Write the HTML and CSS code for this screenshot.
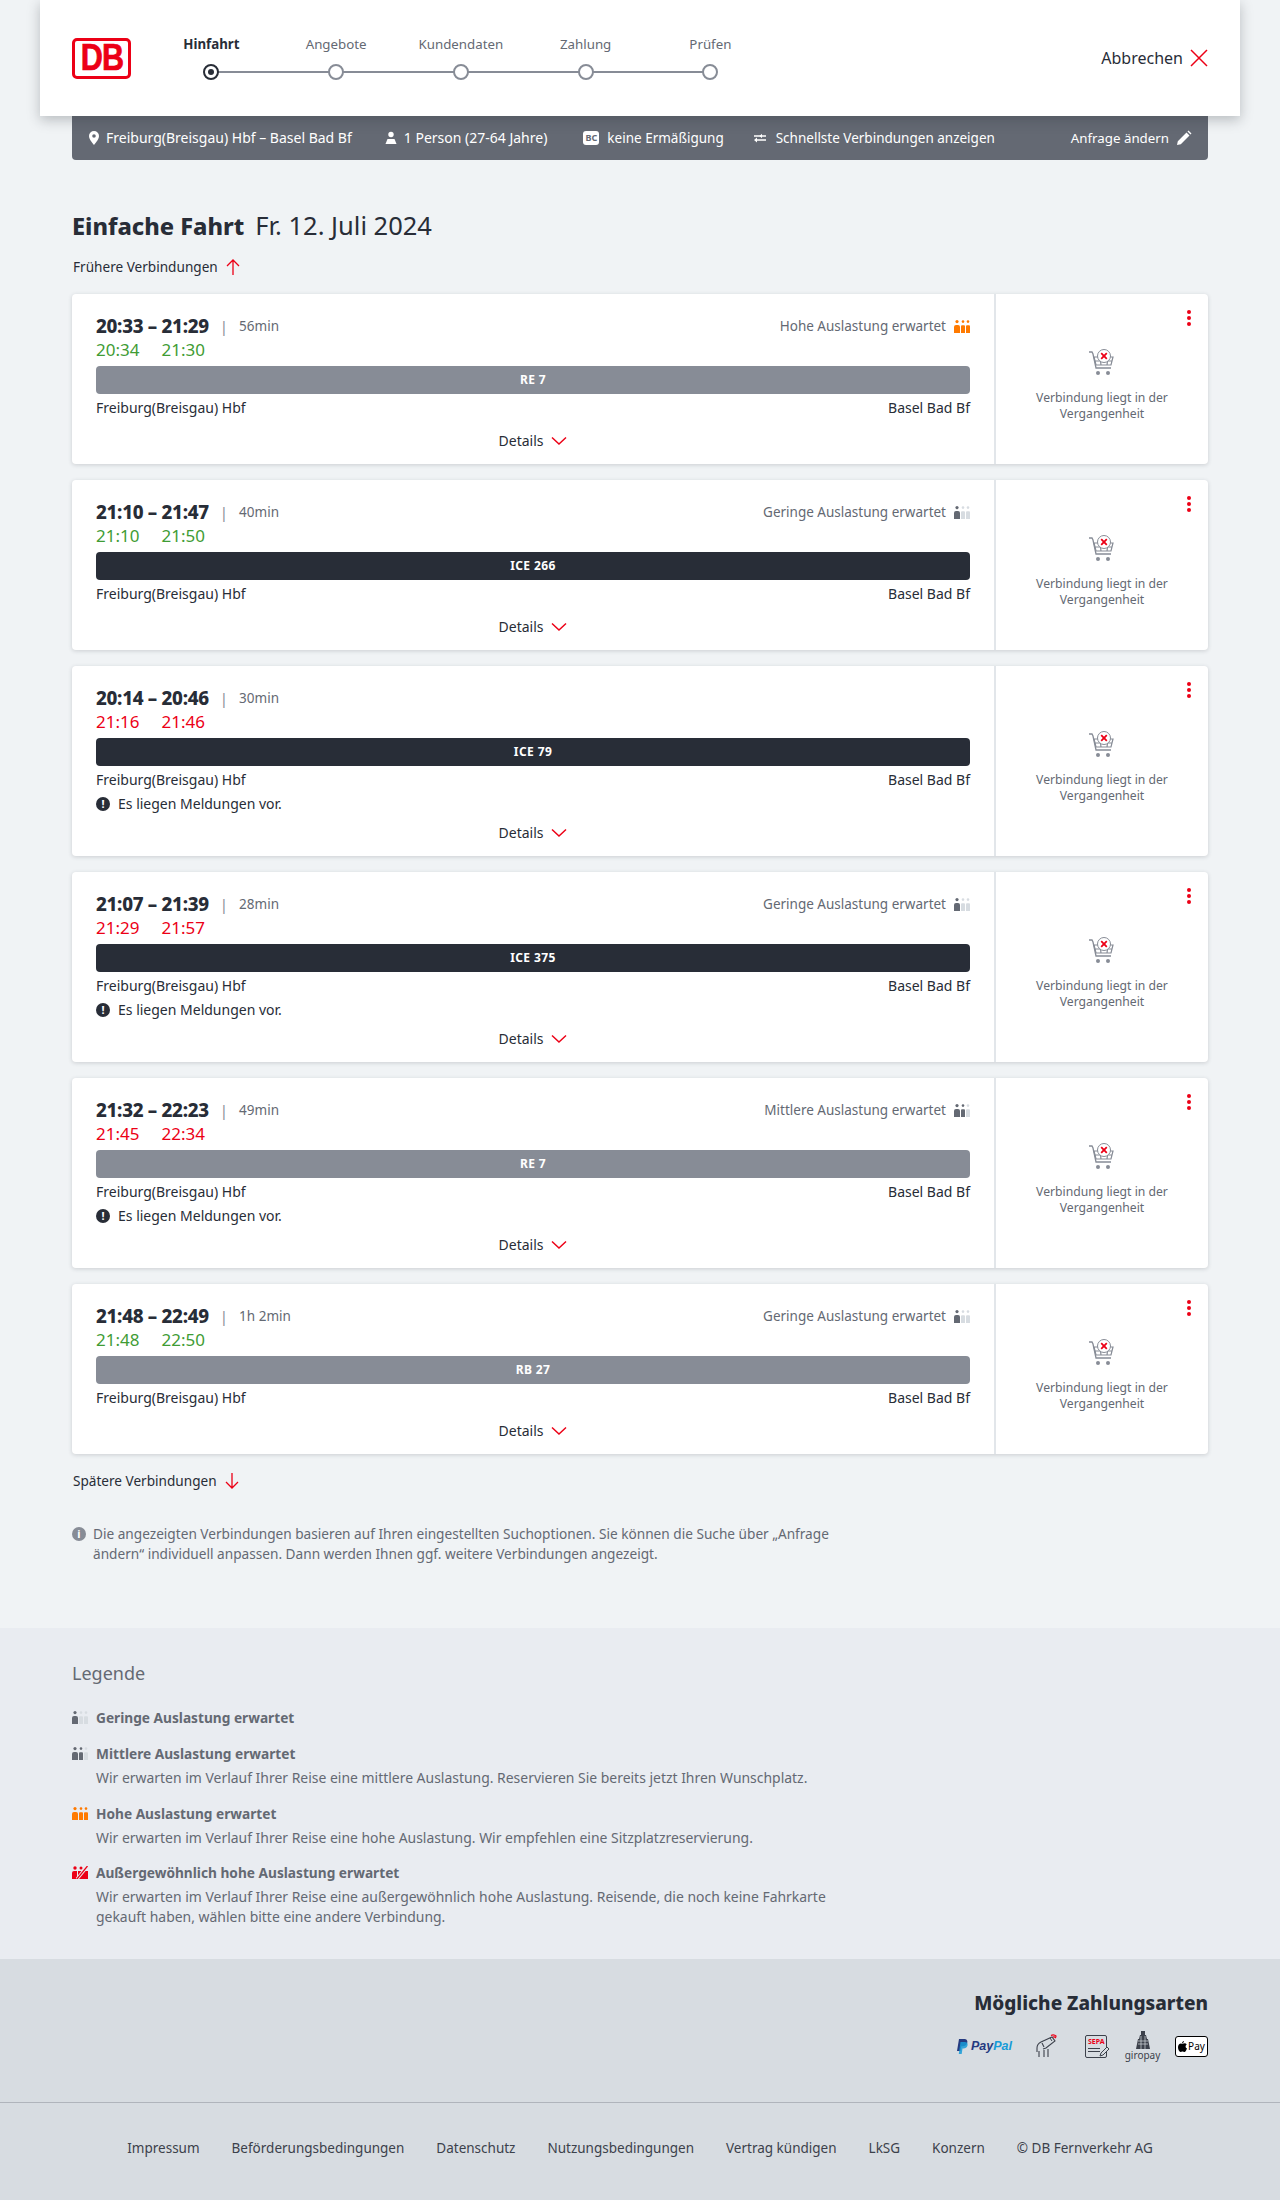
FILE: index.html
```html
<!DOCTYPE html>
<html lang="de">
<head>
<meta charset="utf-8">
<title>Einfache Fahrt</title>
<link rel="stylesheet" href="styles.css">
</head>
<body>
<svg class="defs" width="0" height="0" aria-hidden="true">
  <symbol id="cart" viewBox="0 0 28 28">
    <path d="M1 3h3l1 2 3 14h15" fill="none" stroke="currentColor" stroke-width="1.3"/>
    <path d="M6 8h19l-2 8H8zM7 12h17M12 8l1 8M20 8l-1 8" fill="none" stroke="currentColor" stroke-width="1.2"/>
    <circle cx="10" cy="24" r="2" fill="currentColor"/><circle cx="20" cy="24" r="2" fill="currentColor"/>
    <circle cx="16" cy="7" r="6.5" fill="#fff" stroke="currentColor" stroke-width="1"/>
    <path d="M13.2 4.2l5.6 5.6M18.8 4.2l-5.6 5.6" stroke="#ec0016" stroke-width="1.8"/>
  </symbol>
  <symbol id="fig" viewBox="0 0 16 13">
    <circle cx="3" cy="1.6" r="1.6"/><path d="M0 7a2 2 0 0 1 2-2h2a2 2 0 0 1 2 2v6H0z"/>
  </symbol>
  <symbol id="fig2" viewBox="0 0 16 13">
    <circle cx="9" cy="1.6" r="1.3"/><path d="M7 6.200a1 1 0 0 1 1-1h2a1 1 0 0 1 1 1V13H7z"/>
  </symbol>
  <symbol id="fig3" viewBox="0 0 16 13">
    <circle cx="14" cy="1.6" r="1.300"/><path d="M12 6.200a1 1 0 0 1 1-1h2a1 1 0 0 1 1 1V13h-4z"/>
  </symbol>
  <symbol id="chev" viewBox="0 0 16 10"><path d="M1 1.500l7 6.500 7-6.500" fill="none" stroke="#ec0016" stroke-width="1.500"/></symbol>
</svg>

<header class="topbar">
  <div class="logo"><span class="logo-text">DB</span></div>
  <ol class="stepper">
    <li class="step step-active"><span class="step-label">Hinfahrt</span><span class="step-dot"></span></li>
    <li class="step"><span class="step-label">Angebote</span><span class="step-dot"></span></li>
    <li class="step"><span class="step-label">Kundendaten</span><span class="step-dot"></span></li>
    <li class="step"><span class="step-label">Zahlung</span><span class="step-dot"></span></li>
    <li class="step"><span class="step-label">Prüfen</span><span class="step-dot"></span></li>
  </ol>
  <a class="cancel">Abbrechen
    <svg width="18" height="18" viewBox="0 0 18 18"><path d="M1 1l16 16M17 1L1 17" stroke="#ec0016" stroke-width="1.500"/></svg>
  </a>
</header>

<main class="main">
  <div class="infobar">
    <span class="info-item">
      <svg width="12" height="14" viewBox="0 0 12 14"><path fill-rule="evenodd" d="M6 0a5 5 0 0 1 5 5c0 3.500-5 9-5 9S1 8.500 1 5a5 5 0 0 1 5-5zm0 3.200a1.800 1.800 0 1 0 0 3.600 1.800 1.800 0 0 0 0-3.600z" fill="#fff"/></svg>
      Freiburg(Breisgau) Hbf – Basel Bad Bf</span>
    <span class="info-item">
      <svg width="14" height="14" viewBox="0 0 14 14"><circle cx="7" cy="3.500" r="2.700" fill="#fff"/><path d="M3.500 8h7l2 5H1.500z" fill="#fff"/></svg>
      1 Person (27-64 Jahre)</span>
    <span class="info-item info-small info-bc"><span class="bc">BC</span>keine Ermäßigung</span>
    <span class="info-item info-small info-swap">
      <svg width="12" height="10" viewBox="0 0 12 10"><path d="M0 3h12M3 7h9" stroke="#fff" stroke-width="1.300" fill="none"/><path d="M8 .8v4.400L5.500 3zM0 7l3-2.400v4.800z" fill="#fff"/></svg>
      Schnellste Verbindungen anzeigen</span>
    <span class="info-item info-small info-edit">Anfrage ändern
      <svg width="16" height="16" viewBox="0 0 16 16"><path d="M1 15l.8-3.800L10.500 2.500l3 3L4.800 14.200zM11.500 1.500l1-1 3 3-1 1z" fill="#fff"/></svg>
    </span>
  </div>

  <h1 class="title"><strong>Einfache Fahrt</strong><span class="title-date">Fr. 12. Juli 2024</span></h1>

  <a class="earlier">Frühere Verbindungen
    <svg width="16" height="16" viewBox="0 0 16 16"><path d="M8 16V1M2 7l6-6 6 6" fill="none" stroke="#ec0016" stroke-width="1.300"/></svg>
  </a>

  <section class="cards">
    <article class="card">
      <div class="card-main">
        <div class="row-top"><span class="times">20:33 – 21:29</span><span class="sep">|</span><span class="dur">56min</span>
          <span class="load">Hohe Auslastung erwartet<svg class="occ occ-high" width="16" height="13"><use href="#fig"/><use href="#fig2"/><use href="#fig3"/></svg></span></div>
        <div class="real real-ok"><span>20:34</span><span>21:30</span></div>
        <div class="bar bar-regio">RE 7</div>
        <div class="places"><span>Freiburg(Breisgau) Hbf</span><span>Basel Bad Bf</span></div>
        <a class="details">Details<svg width="16" height="10"><use href="#chev"/></svg></a>
      </div>
      <aside class="card-side"><span class="menu"><i></i><i></i><i></i></span><svg class="cart" width="28" height="28"><use href="#cart"/></svg><p class="side-text">Verbindung liegt in der Vergangenheit</p></aside>
    </article>

    <article class="card">
      <div class="card-main">
        <div class="row-top"><span class="times">21:10 – 21:47</span><span class="sep">|</span><span class="dur">40min</span>
          <span class="load">Geringe Auslastung erwartet<svg class="occ" width="16" height="13"><use href="#fig"/><use class="off" href="#fig2"/><use class="off" href="#fig3"/></svg></span></div>
        <div class="real real-ok"><span>21:10</span><span>21:50</span></div>
        <div class="bar bar-ice">ICE 266</div>
        <div class="places"><span>Freiburg(Breisgau) Hbf</span><span>Basel Bad Bf</span></div>
        <a class="details">Details<svg width="16" height="10"><use href="#chev"/></svg></a>
      </div>
      <aside class="card-side"><span class="menu"><i></i><i></i><i></i></span><svg class="cart" width="28" height="28"><use href="#cart"/></svg><p class="side-text">Verbindung liegt in der Vergangenheit</p></aside>
    </article>

    <article class="card">
      <div class="card-main">
        <div class="row-top"><span class="times">20:14 – 20:46</span><span class="sep">|</span><span class="dur">30min</span></div>
        <div class="real real-late"><span>21:16</span><span>21:46</span></div>
        <div class="bar bar-ice">ICE 79</div>
        <div class="places"><span>Freiburg(Breisgau) Hbf</span><span>Basel Bad Bf</span></div>
        <div class="notice"><span class="notice-icon">!</span>Es liegen Meldungen vor.</div>
        <a class="details">Details<svg width="16" height="10"><use href="#chev"/></svg></a>
      </div>
      <aside class="card-side"><span class="menu"><i></i><i></i><i></i></span><svg class="cart" width="28" height="28"><use href="#cart"/></svg><p class="side-text">Verbindung liegt in der Vergangenheit</p></aside>
    </article>

    <article class="card">
      <div class="card-main">
        <div class="row-top"><span class="times">21:07 – 21:39</span><span class="sep">|</span><span class="dur">28min</span>
          <span class="load">Geringe Auslastung erwartet<svg class="occ" width="16" height="13"><use href="#fig"/><use class="off" href="#fig2"/><use class="off" href="#fig3"/></svg></span></div>
        <div class="real real-late"><span>21:29</span><span>21:57</span></div>
        <div class="bar bar-ice">ICE 375</div>
        <div class="places"><span>Freiburg(Breisgau) Hbf</span><span>Basel Bad Bf</span></div>
        <div class="notice"><span class="notice-icon">!</span>Es liegen Meldungen vor.</div>
        <a class="details">Details<svg width="16" height="10"><use href="#chev"/></svg></a>
      </div>
      <aside class="card-side"><span class="menu"><i></i><i></i><i></i></span><svg class="cart" width="28" height="28"><use href="#cart"/></svg><p class="side-text">Verbindung liegt in der Vergangenheit</p></aside>
    </article>

    <article class="card">
      <div class="card-main">
        <div class="row-top"><span class="times">21:32 – 22:23</span><span class="sep">|</span><span class="dur">49min</span>
          <span class="load">Mittlere Auslastung erwartet<svg class="occ" width="16" height="13"><use href="#fig"/><use href="#fig2"/><use class="off" href="#fig3"/></svg></span></div>
        <div class="real real-late"><span>21:45</span><span>22:34</span></div>
        <div class="bar bar-regio">RE 7</div>
        <div class="places"><span>Freiburg(Breisgau) Hbf</span><span>Basel Bad Bf</span></div>
        <div class="notice"><span class="notice-icon">!</span>Es liegen Meldungen vor.</div>
        <a class="details">Details<svg width="16" height="10"><use href="#chev"/></svg></a>
      </div>
      <aside class="card-side"><span class="menu"><i></i><i></i><i></i></span><svg class="cart" width="28" height="28"><use href="#cart"/></svg><p class="side-text">Verbindung liegt in der Vergangenheit</p></aside>
    </article>

    <article class="card">
      <div class="card-main">
        <div class="row-top"><span class="times">21:48 – 22:49</span><span class="sep">|</span><span class="dur">1h 2min</span>
          <span class="load">Geringe Auslastung erwartet<svg class="occ" width="16" height="13"><use href="#fig"/><use class="off" href="#fig2"/><use class="off" href="#fig3"/></svg></span></div>
        <div class="real real-ok"><span>21:48</span><span>22:50</span></div>
        <div class="bar bar-regio">RB 27</div>
        <div class="places"><span>Freiburg(Breisgau) Hbf</span><span>Basel Bad Bf</span></div>
        <a class="details">Details<svg width="16" height="10"><use href="#chev"/></svg></a>
      </div>
      <aside class="card-side"><span class="menu"><i></i><i></i><i></i></span><svg class="cart" width="28" height="28"><use href="#cart"/></svg><p class="side-text">Verbindung liegt in der Vergangenheit</p></aside>
    </article>
  </section>

  <a class="later">Spätere Verbindungen
    <svg width="16" height="16" viewBox="0 0 16 16"><path d="M8 0v15M2 9l6 6 6-6" fill="none" stroke="#ec0016" stroke-width="1.300"/></svg>
  </a>

  <p class="note"><span class="note-icon">i</span><span>Die angezeigten Verbindungen basieren auf Ihren eingestellten Suchoptionen. Sie können die Suche über „Anfrage ändern“ individuell anpassen. Dann werden Ihnen ggf. weitere Verbindungen angezeigt.</span></p>
</main>

<section class="legend">
  <div class="legend-inner">
    <h2 class="legend-title">Legende</h2>
    <div class="legend-item legend-first">
      <svg class="occ" width="16" height="13"><use href="#fig"/><use class="off" href="#fig2"/><use class="off" href="#fig3"/></svg>
      <div><h3 class="legend-head">Geringe Auslastung erwartet</h3></div>
    </div>
    <div class="legend-item">
      <svg class="occ" width="16" height="13"><use href="#fig"/><use href="#fig2"/><use class="off" href="#fig3"/></svg>
      <div><h3 class="legend-head">Mittlere Auslastung erwartet</h3><p class="legend-text">Wir erwarten im Verlauf Ihrer Reise eine mittlere Auslastung. Reservieren Sie bereits jetzt Ihren Wunschplatz.</p></div>
    </div>
    <div class="legend-item">
      <svg class="occ occ-high" width="16" height="13"><use href="#fig"/><use href="#fig2"/><use href="#fig3"/></svg>
      <div><h3 class="legend-head">Hohe Auslastung erwartet</h3><p class="legend-text">Wir erwarten im Verlauf Ihrer Reise eine hohe Auslastung. Wir empfehlen eine Sitzplatzreservierung.</p></div>
    </div>
    <div class="legend-item legend-last">
      <svg class="occ occ-full" width="16" height="13" viewBox="0 0 16 13"><path d="M0 7a2 2 0 0 1 2-2h3v8H0z"/><circle cx="3" cy="2" r="1.700"/><circle cx="9" cy="2" r="1.500"/><path d="M6 5h10v8H6z"/><path d="M15.500 0L5 13" stroke="#e9ecf1" stroke-width="3.200"/><path d="M15.500 0L5 13" stroke="#ec0016" stroke-width="1.300"/></svg>
      <div><h3 class="legend-head">Außergewöhnlich hohe Auslastung erwartet</h3><p class="legend-text">Wir erwarten im Verlauf Ihrer Reise eine außergewöhnlich hohe Auslastung. Reisende, die noch keine Fahrkarte gekauft haben, wählen bitte eine andere Verbindung.</p></div>
    </div>
  </div>
</section>

<section class="payments">
  <div class="pay-inner">
    <h2 class="pay-title">Mögliche Zahlungsarten</h2>
    <div class="pay-icons">
      <span class="paypal"><svg width="12" height="15" viewBox="0 0 12 15"><path d="M3 0h5c2.500 0 4 1.500 3.200 4-.7 2.300-2.600 3.300-4.500 3.300H5.300L4.400 12H1z" fill="#253b80"/><path d="M4.500 3h4.300c2 0 3.200 1.200 2.800 3.200-.5 2.300-2.300 3.300-4.200 3.300H6.500L5.700 15H2.800z" fill="#179bd7" opacity=".85"/></svg><span class="pp-word"><b class="pp-a">Pay</b><b class="pp-b">Pal</b></span></span>
      <svg class="pay-card" width="22" height="24" viewBox="0 0 22 24"><path d="M1 14c0-3 2-5 4-6l11-5 3 4-9 7-3 1M3 23v-6M8 23v-7M12 23v-8M1 14v4M6 9l2 4" fill="none" stroke="#3c414b" stroke-width="1.100"/><path d="M14 4l2 3" stroke="#3c414b" stroke-width="1"/><path d="M15 1.500c2-1.200 4-.5 5.500 1M17 3.200c1-.5 2-.2 3 .8" fill="none" stroke="#ec0016" stroke-width="1.300"/></svg>
      <span class="sepa"><b class="sepa-word">SEPA</b><i class="sepa-line"></i><i class="sepa-line"></i><svg class="sepa-pen" width="12" height="12" viewBox="0 0 12 12"><path d="M1 11l1-3 6-6 2 2-6 6z" fill="#d7dce1" stroke="#3c414b"/></svg></span>
      <span class="giro"><svg width="16" height="18" viewBox="0 0 16 18"><path d="M6 0h4v4h1l1 4h1l2 10H1L3 8h1l1-4h1z" fill="#3c414b"/><path d="M3 10h10M3 13h10M6 5v13M10 5v13" stroke="#d7dce1" stroke-width=".7"/></svg><span class="giro-text">giropay</span></span>
      <span class="applepay"><svg width="9" height="11" viewBox="0 0 9 11"><path d="M6 0c0 1.200-.8 2.200-2 2.300C4 1 5 .2 6 0zM4.500 2.800c.8 0 1.300-.5 2.200-.5.800 0 1.500.4 2 1.100-1.700 1-1.400 3.400.3 4.100C8.500 8.800 7.500 11 6.400 11c-.8 0-1-.5-1.900-.5s-1.200.5-1.900.5C1.300 11 0 8.500 0 6.300 0 4 1.400 2.400 3 2.400c.6 0 1 .4 1.500.4z" fill="#000"/></svg>Pay</span>
    </div>
  </div>
</section>

<footer class="footer">
  <a>Impressum</a><a>Beförderungsbedingungen</a><a>Datenschutz</a><a>Nutzungsbedingungen</a><a>Vertrag kündigen</a><a>LkSG</a><a>Konzern</a><a>© DB Fernverkehr AG</a>
</footer>
</body>
</html>
```
FILE: styles.css
```css
* { box-sizing: border-box; }
html, body { margin: 0; padding: 0; }
body {
  background: #f0f3f5;
  color: #282d37;
  font-family: "Noto Sans", "Open Sans", sans-serif;
  font-size: 14px;
  line-height: 20px;
  width: 1280px;
}
h1, h2, h3, p, ol { margin: 0; padding: 0; }
.defs { position: absolute; }

.topbar {
  position: relative;
  z-index: 2;
  width: 1200px;
  height: 116px;
  margin: 0 auto;
  padding: 0 32px;
  background: #fff;
  box-shadow: 0 4px 12px rgba(40, 45, 55, .28);
  display: flex;
  align-items: center;
}
.logo {
  width: 59px;
  height: 41px;
  background: #fff;
  border: 3.5px solid #ec0016;
  border-radius: 5px;
  display: flex;
  align-items: center;
  justify-content: center;
  flex: none;
}
.logo-text {
  color: #ec0016;
  font-family: "Liberation Sans", sans-serif;
  font-weight: 700;
  font-size: 36px;
  line-height: 32px;
  letter-spacing: -1px;
  transform: scaleX(.85);
  -webkit-text-stroke: .7px #ec0016;
}
.stepper {
  list-style: none;
  display: flex;
  margin: -2px 0 0 18px;
}
.step {
  position: relative;
  width: 124.75px;
  display: flex;
  flex-direction: column;
  align-items: center;
  gap: 10px;
  color: #646973;
  font-size: 13.3px;
}
.step-label { line-height: 20px; }
.step-active .step-label { font-weight: 700; color: #282d37; }
.step-dot {
  position: relative;
  z-index: 1;
  width: 16px;
  height: 16px;
  border: 2px solid #878c96;
  border-radius: 50%;
  background: #fff;
}
.step-active .step-dot { border-color: #282d37; }
.step-active .step-dot::after {
  content: "";
  position: absolute;
  inset: 3px;
  border-radius: 50%;
  background: #282d37;
}
.step:not(:last-child)::after {
  content: "";
  position: absolute;
  left: 50%;
  width: 100%;
  bottom: 7px;
  height: 2px;
  background: #878c96;
}
.cancel {
  margin-left: auto;
  display: flex;
  align-items: center;
  gap: 7px;
  font-size: 16px;
  color: #282d37;
}

.main { width: 1136px; margin: 0 auto; }
.infobar {
  height: 44px;
  background: #646973;
  border-radius: 0 0 4px 4px;
  color: #fff;
  display: flex;
  align-items: center;
  padding: 0 16px;
  gap: 32px;
}
.info-item { display: flex; align-items: center; gap: 6px; }
.info-small { font-size: 13.5px; }
.info-bc { margin-left: 4px; }
.info-swap { margin-left: -2px; gap: 10px; }
.info-edit { margin-left: auto; gap: 7px; font-size: 13.3px; }
.bc {
  width: 16px;
  height: 14px;
  margin-right: 2px;
  background: #fff;
  color: #646973;
  border-radius: 3px;
  font-size: 9px;
  font-weight: 700;
  line-height: 14px;
  text-align: center;
}

.title {
  margin-top: 49px;
  height: 32px;
  font-size: 24px;
  line-height: 32px;
  font-weight: 400;
  display: flex;
  align-items: baseline;
  gap: 11px;
}
.title strong { font-weight: 800; font-size: 23.6px; line-height: 32px; }
.title-date { font-size: 25.5px; line-height: 32px; }
.earlier, .later {
  display: flex;
  align-items: center;
  gap: 7px;
  height: 20px;
  padding-left: 1px;
  font-size: 13.6px;
}
.earlier { margin-top: 16px; }
.later { margin-top: 17px; }

.cards { margin-top: 17px; display: flex; flex-direction: column; gap: 16px; }
.card {
  display: grid;
  grid-template-columns: 924px 1fr;
  background: #fff;
  border-radius: 4px;
  box-shadow: 0 1px 4px rgba(40, 45, 55, .18);
}
.card-main { padding: 20px 24px 13px; border-right: 2px solid #e2e6ea; display: flex; flex-direction: column; }
.row-top { display: flex; align-items: center; height: 24px; }
.times { font-weight: 800; font-size: 18.8px; letter-spacing: -.3px; }
.sep { margin: 0 11px 0 11px; color: #878c96; font-size: 15px; }
.dur { color: #646973; font-size: 13.5px; }
.load { margin-left: auto; display: flex; align-items: center; gap: 8px; color: #646973; font-size: 13.5px; }
.occ { fill: #646973; flex: none; }
.occ .off { fill: #d7dce1; }
.occ-high { fill: #ff7a00; }
.occ-full { fill: #ec0016; }

.real { display: flex; gap: 22px; font-size: 17px; line-height: 24px; }
.real-ok { color: #3f9c35; }
.real-late { color: #ec0016; }
.bar {
  margin-top: 4px;
  height: 28px;
  border-radius: 4px;
  color: #fff;
  font-size: 12px;
  font-weight: 700;
  line-height: 28px;
  text-align: center;
  letter-spacing: .4px;
}
.bar-regio { background: #878c96; }
.bar-ice { background: #282d37; }
.places { margin-top: 4px; display: flex; justify-content: space-between; }
.notice {
  margin: 4px 0 -4px;
  display: flex;
  align-items: center;
  gap: 8px;
}
.notice-icon, .note-icon {
  width: 14px;
  height: 14px;
  border-radius: 50%;
  background: #282d37;
  color: #fff;
  font-size: 11px;
  font-weight: 700;
  line-height: 14px;
  text-align: center;
  flex: none;
}
.details {
  margin-top: 13px;
  align-self: center;
  display: flex;
  align-items: center;
  gap: 8px;
  height: 20px;
}

.card-side {
  position: relative;
  display: flex;
  flex-direction: column;
  align-items: center;
  justify-content: center;
  padding: 12px 20px 0;
}
.menu {
  position: absolute;
  top: 16px;
  right: 17px;
  display: flex;
  flex-direction: column;
  gap: 2px;
}
.menu i { width: 4px; height: 4px; border-radius: 50%; background: #ec0016; }
.cart { color: #878c96; margin-bottom: 13px; }
.side-text { font-size: 12.2px; line-height: 16px; color: #646973; text-align: center; }

.note {
  margin-top: 33px;
  width: 782px;
  display: flex;
  gap: 7px;
  color: #646973;
  font-size: 13.65px;
}
.note-icon { background: #878c96; margin-top: 3px; }

.legend { margin-top: 64px; background: #e9ecf1; padding: 33px 0 32px; }
.legend-inner { width: 1136px; margin: 0 auto; }
.legend-title { font-size: 18px; line-height: 24px; font-weight: 400; color: #646973; }
.legend-item { display: flex; gap: 8px; margin-top: 16px; width: 770px; }
.legend-first { margin-top: 23px; }
.legend-last { margin-top: 15px; }
.legend-item .occ { margin-top: 3px; }
.legend-head { font-size: 13.7px; line-height: 20px; font-weight: 700; color: #646973; }
.legend-text { margin-top: 4px; color: #646973; font-size: 13.95px; }

.payments { background: #d7dce1; padding: 30px 0 0; height: 144px; border-bottom: 1px solid #afb4bb; }
.pay-inner { width: 1136px; margin: 0 auto; display: flex; flex-direction: column; align-items: flex-end; }
.pay-title { font-size: 19px; line-height: 28px; font-weight: 800; }
.pay-icons { margin-top: 12px; display: flex; align-items: center; height: 34px; }
.paypal { display: flex; align-items: center; gap: 3px; font-size: 12.5px; font-style: italic; width: 56px; font-family: "Liberation Sans", sans-serif; }
.pp-word { white-space: nowrap; }
.pp-b { color: #179bd7; }
.pp-a { color: #253b80; }
.pay-card { margin-left: 24px; }
.sepa {
  position: relative;
  margin-left: 27px;
  width: 22px;
  height: 23px;
  border: 1px solid #3c414b;
  border-radius: 2px;
  display: flex;
  flex-direction: column;
  gap: 2px;
  padding: 1px 2px;
}
.sepa-word { color: #ec0016; font-size: 7px; line-height: 9px; }
.sepa-line { display: block; width: 12px; height: 1px; background: #3c414b; }
.sepa-pen { position: absolute; right: -5px; bottom: 0; }
.giro { margin-left: 19px; width: 33px; display: flex; flex-direction: column; align-items: center; color: #3c414b; }
.giro-text { font-size: 10px; line-height: 12px; }
.applepay {
  margin-left: 16px;
  width: 33px;
  height: 21px;
  border: 1px solid #000;
  border-radius: 3px;
  background: #fff;
  color: #000;
  font-size: 10px;
  line-height: 19px;
  display: flex;
  align-items: center;
  justify-content: center;
  gap: 1px;
}

.footer {
  height: 97px;
  padding-top: 35px;
  background: #d7dce1;
  display: flex;
  justify-content: center;
  gap: 32px;
  color: #3c414b;
  font-size: 13.5px;
}
```
